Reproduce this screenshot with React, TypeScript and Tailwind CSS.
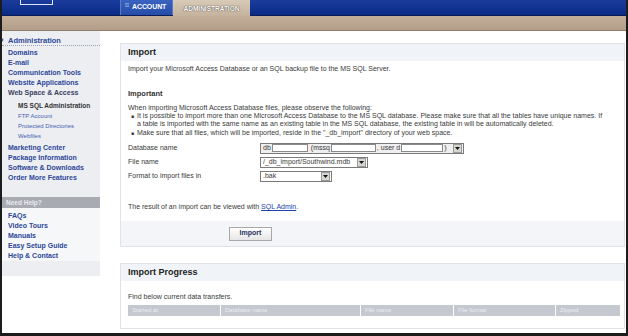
import React from "react";

const MAIN_LINKS = ["Domains", "E-mail", "Communication Tools", "Website Applications"];
const SUB_LINKS = ["FTP Account", "Protected Directories", "Webfiles"];
const MORE_LINKS = ["Marketing Center", "Package Information", "Software & Downloads", "Order More Features"];
const HELP_LINKS = ["FAQs", "Video Tours", "Manuals", "Easy Setup Guide", "Help & Contact"];
const COLUMNS: [string, string][] = [
  ["Started at", "w-[92px]"],
  ["Database name", "w-[139px]"],
  ["File name", "w-[92px]"],
  ["File format", "w-[101px]"],
  ["Zipped", "flex-1"],
];

function Arrow() {
  return (
    <span className="w-[9px] h-[9px] flex items-center justify-center bg-[#d8d6d0] border border-[#9a9a9a]">
      <svg width="5" height="3" viewBox="0 0 5 3">
        <path d="M0 0h5L2.5 3z" fill="#111" />
      </svg>
    </span>
  );
}

function Blank({ w }: { w: string }) {
  return <span className={`${w} h-[8px] bg-white border border-[#8a8a8a]`} />;
}

function Sidebar() {
  return (
    <aside className="w-[98px] shrink-0 self-start bg-[#eceef2] pt-[4px] pb-[15px] text-[7px] font-bold leading-[10px] text-[#2c4797]">
      <div className="relative h-[11px] leading-[11px] pl-[6px] border-b border-dotted border-[#9aa3b8] text-[7.5px]">
        <span className="absolute left-[-2px] top-0 text-[6px] text-[#223]">#</span>
        Administration
      </div>
      <div className="pt-[2px] pl-[6px]">
        {MAIN_LINKS.map((l) => (
          <div key={l}>{l}</div>
        ))}
        <div className="text-[#3b4160]">Web Space &amp; Access</div>
        <div className="mt-[3px] pl-[10px]">
          <div className="text-[#333] text-[6.5px]">MS SQL Administration</div>
          {SUB_LINKS.map((l) => (
            <div key={l} className="font-normal text-[6px] text-[#4561b3]">
              {l}
            </div>
          ))}
        </div>
        <div className="mt-[2px]">
          {MORE_LINKS.map((l) => (
            <div key={l}>{l}</div>
          ))}
        </div>
      </div>
      <div className="mt-[14px] h-[11px] leading-[11px] bg-[#a9abb3] text-[#e9eaef] pl-[4px] text-[6.5px]">Need Help?</div>
      <div className="pt-[3px] pl-[6px] bg-[#f6f7f9]">
        {HELP_LINKS.map((l) => (
          <div key={l}>{l}</div>
        ))}
      </div>
    </aside>
  );
}

function FormRow({ label, children }: { label: string; children: React.ReactNode }) {
  return (
    <div className="flex items-center h-[12px]">
      <span className="w-[132px] shrink-0">{label}</span>
      {children}
    </div>
  );
}

function ImportPanel() {
  return (
    <section className="border border-[#dfe3e8]">
      <div className="h-[17px] bg-[#f0f3f7] px-[7px] flex items-center text-[9px] font-bold text-[#222]">Import</div>
      <div className="px-[7px] text-[7px] leading-[8px] text-[#3a3a3a]">
        <p className="pt-[4px]">Import your Microsoft Access Database or an SQL backup file to the MS SQL Server.</p>
        <h3 className="mt-[17px] font-bold text-[7.5px] text-[#333]">Important</h3>
        <p className="mt-[6px]">When importing Microsoft Access Database files, please observe the following:</p>
        <ul className="pl-[3px] pr-[14px]">
          <li className="flex">
            <span className="w-[6px] shrink-0 text-[5px]">■</span>
            <span>
              It is possible to import more than one Microsoft Access Database to the MS SQL database. Please make sure that all the tables have unique names. If a table is imported with the same name as an existing table in the MS SQL database, the existing table in will be automatically deleted.
            </span>
          </li>
          <li className="flex mt-[1px]">
            <span className="w-[6px] shrink-0 text-[5px]">■</span>
            <span>Make sure that all files, which will be imported, reside in the "_db_import" directory of your web space.</span>
          </li>
        </ul>
        <div className="mt-[5px] flex flex-col gap-[2px]">
          <FormRow label="Database name">
            <span className="w-[204px] h-[11px] flex items-center gap-[1px] bg-[#efefef] border border-[#7a7a7a] pl-[2px]">
              db
              <Blank w="w-[36px]" />
              <span className="ml-[2px]">(mssq</span>
              <Blank w="w-[45px]" />
              <span>, user d</span>
              <Blank w="w-[42px]" />
              <span>)</span>
              <span className="ml-auto mr-[1px]">
                <Arrow />
              </span>
            </span>
          </FormRow>
          <FormRow label="File name">
            <span className="w-[108px] h-[11px] flex items-center bg-white border border-[#7a7a7a] pl-[2px]">
              /_db_import/Southwind.mdb
              <span className="ml-auto mr-[1px]">
                <Arrow />
              </span>
            </span>
          </FormRow>
          <FormRow label="Format to import files in">
            <span className="w-[72px] h-[11px] flex items-center bg-white border border-[#7a7a7a] pl-[2px]">
              .bak
              <span className="ml-auto mr-[1px]">
                <Arrow />
              </span>
            </span>
          </FormRow>
        </div>
        <p className="mt-[21px]">
          The result of an import can be viewed with <span className="text-[#2145a6] underline">SQL Admin</span>.
        </p>
      </div>
      <div className="mt-[10px] h-[25px] bg-[#f3f5f8] flex items-center pl-[108px]">
        <button className="w-[43px] h-[14px] border border-[#a8a8a8] bg-gradient-to-b from-white to-[#e6e6e6] text-[7px] font-bold text-[#27335e]">
          Import
        </button>
      </div>
    </section>
  );
}

function ProgressPanel() {
  return (
    <section className="mt-[16px] border border-[#dfe3e8] pb-[12px]">
      <div className="h-[17px] bg-[#f0f3f7] px-[7px] flex items-center text-[9px] font-bold text-[#222]">Import Progress</div>
      <p className="mt-[12px] px-[7px] text-[7px] leading-[8px] text-[#3a3a3a]">Find below current data transfers.</p>
      <div className="mt-[4px] ml-[7px] mr-[4px] flex h-[11px] gap-[1px] bg-white">
        {COLUMNS.map(([c, w]) => (
          <div key={c} className={`${w} bg-[#c6c8d0] text-[6px] leading-[11px] text-[#eceef3] pl-[4px]`}>
            {c}
          </div>
        ))}
      </div>
    </section>
  );
}

export default function App() {
  return (
    <div className="w-[628px] h-[336px] overflow-hidden flex flex-col bg-white border-l-2 border-r-2 border-b-[3px] border-[#1c1c1c] font-['Liberation_Sans',Arial,sans-serif]">
      <header className="h-[16px] shrink-0 flex items-start bg-gradient-to-b from-[#1a3c9c] to-[#0a2a86] border-b border-[#0a1c55]">
        <div className="ml-[18px] w-[33px] h-[5px] border-x border-b border-[#dfe6ff]" />
        <nav className="ml-[67px] flex h-full">
          <div className="w-[53px] h-full flex items-center gap-[3px] pl-[4px] bg-gradient-to-b from-[#3a62c0] to-[#244ca8] border-x border-[#5b7cc8]">
            <svg width="4" height="4" viewBox="0 0 4 4" className="self-start mt-[3px]">
              <path d="M0 0.5h4M0 2h4M0 3.5h4" stroke="#9fb2dd" strokeWidth="0.7" />
            </svg>
            <span className="text-[7px] font-bold text-white tracking-[-0.1px]">ACCOUNT</span>
          </div>
          <div className="w-[77px] h-[17px] flex items-center justify-center bg-gradient-to-b from-[#d8cab8] to-[#c3b19b] text-[6.5px] font-bold text-white [text-shadow:0_0_1px_#4a3f34,0_0_1px_#4a3f34]">
            ADMINISTRATION
          </div>
        </nav>
      </header>
      <div className="h-[15px] shrink-0 bg-gradient-to-b from-[#c2ae99] to-[#b39e89] border-b border-[#8f7e6c]" />
      <div className="flex flex-1 min-h-0">
        <Sidebar />
        <main className="flex-1 pl-[20px] pt-[12px] pr-[1px]">
          <ImportPanel />
          <ProgressPanel />
        </main>
      </div>
    </div>
  );
}
